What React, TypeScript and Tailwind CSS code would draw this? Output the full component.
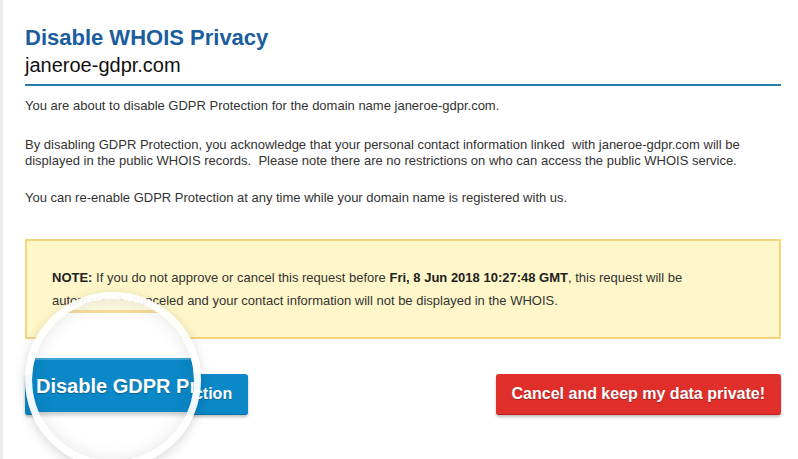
const font = "font-['Liberation_Sans',Arial,sans-serif]";

function Lens() {
  return (
    <div className="pointer-events-none absolute left-[22px] top-[292px] h-[176px] w-[176px] rounded-full shadow-[0_3px_12px_rgba(0,0,0,0.16)]">
      <div className="absolute left-[7px] top-[7px] h-[162px] w-[162px] overflow-hidden rounded-full bg-white">
        <div className="absolute left-0 top-0 h-[11px] w-full bg-[#fffbe2]" />
        <div className="absolute left-0 top-[11px] h-[3px] w-full bg-[#f7dc9a]" />
        <div className="absolute left-[-10px] top-[59px] flex h-[54px] w-[220px] items-center border-t-2 border-[#3ea3d8] bg-[#0b88c8] pl-[14px] shadow-[0_3px_4px_rgba(0,0,0,0.22)]">
          <span className="whitespace-nowrap text-[20px] font-bold text-white [text-shadow:0_1px_1px_rgba(0,0,0,0.3)]">
            Disable GDPR Protection
          </span>
        </div>
        <div className="absolute inset-0 rounded-full shadow-[inset_0_0_18px_rgba(0,0,0,0.1)]" />
      </div>
      <div className="absolute inset-0 rounded-full border-[7px] border-white/95" />
    </div>
  );
}

export default function App() {
  return (
    <div className={`relative h-[459px] overflow-hidden border-l-[3px] border-[#ededed] bg-white pl-[22px] pr-[17px] ${font}`}>
      <h1 className="pt-[25px] text-[22px] font-bold leading-[26px] text-[#1b5d9e]">
        Disable WHOIS Privacy
      </h1>
      <div className="mt-[2px] text-[20px] leading-[24px] text-[#111]">janeroe-gdpr.com</div>
      <div className="mt-[7px] h-[2px] bg-[#2a7dab]" />

      <div className="text-[13px] leading-[16px] text-[#333]">
        <p className="mt-[12px]">
          You are about to disable GDPR Protection for the domain name janeroe-gdpr.com.
        </p>
        <p className="mt-[23px]">
          By disabling GDPR Protection, you acknowledge that your personal contact information
          linked{"\u00a0"} with janeroe-gdpr.com will be
          <br />
          displayed in the public WHOIS records.{"\u00a0"} Please note there are no restrictions on
          who can access the public WHOIS service.
        </p>
        <p className="mt-[21px]">
          You can re-enable GDPR Protection at any time while your domain name is registered with
          us.
        </p>
      </div>

      <div className="mt-[33px] border-2 border-[#f6d47f] bg-[#fff7c9] px-[25px] py-[25px] text-[13px] leading-[23px] text-[#333]">
        <b className="text-[#222]">NOTE:</b> If you do not approve or cancel this request before{" "}
        <b className="text-[#222]">Fri, 8 Jun 2018 10:27:48 GMT</b>, this request will be
        <br />
        automatically canceled and your contact information will not be displayed in the WHOIS.
      </div>

      <div className="mt-[35px] flex items-start justify-between">
        <button
          type="button"
          className="h-[41px] rounded-[3px] border-b border-[#0a73ab] bg-[#0b88c8] px-4 text-[16px] font-bold text-white shadow-[0_2px_3px_rgba(0,0,0,0.25)] [text-shadow:0_1px_1px_rgba(0,0,0,0.25)]"
        >
          Disable GDPR Protection
        </button>
        <button
          type="button"
          className="h-[41px] rounded-[3px] border-b border-[#c21d1a] bg-[#e02f2b] px-4 text-[16px] font-bold text-white shadow-[0_2px_3px_rgba(0,0,0,0.25)] [text-shadow:0_1px_1px_rgba(0,0,0,0.3)]"
        >
          Cancel and keep my data private!
        </button>
      </div>

      <Lens />
    </div>
  );
}
